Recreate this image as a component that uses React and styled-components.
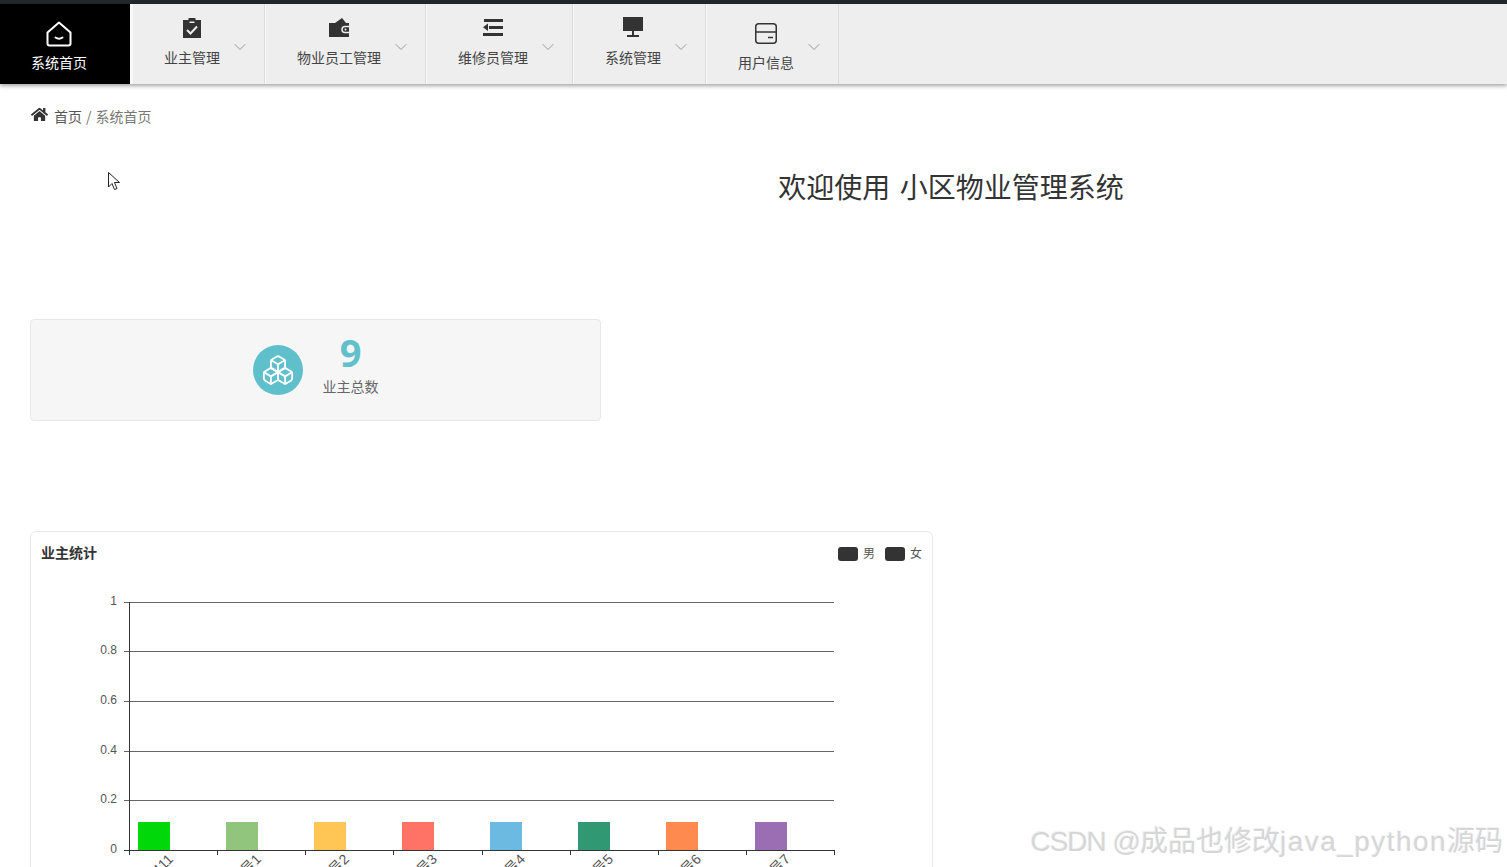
import React from 'react';
import styled, { createGlobalStyle } from 'styled-components';
import { FaHome } from 'react-icons/fa';
import { Boxes, ChevronDown } from 'lucide-react';

const GlobalStyle = createGlobalStyle`
  html, body {
    margin: 0;
    height: 100%;
    overflow: hidden;
    background: #ffffff;
  }
  body {
    color: #333333;
    font-family: "Open Sans", "Noto Sans CJK SC", sans-serif;
    font-size: 14px;
  }
`;

const Page = styled.div`
  height: 867px;
  overflow: hidden;
  position: relative;
`;

const TopStrip = styled.div`
  background: #20282a;
  height: 4px;
`;

const Nav = styled.nav`
  background: #eeeeee;
  box-shadow: 0 2px 4px rgba(0, 0, 0, 0.35);
  display: flex;
  height: 80px;
  position: relative;
`;

const HomeTab = styled.a`
  align-items: center;
  background: #000000;
  box-sizing: border-box;
  color: #ffffff;
  display: flex;
  flex-direction: column;
  gap: 5px;
  padding: 17px 12px 0 0;
  width: 130px;
`;

const NavItem = styled.a`
  align-items: center;
  border-left: 1px solid #f8f8f8;
  border-right: 1px solid #dcdcdc;
  box-sizing: border-box;
  color: #444444;
  display: flex;
  gap: 15px;
  padding: 0 19px 0 31px;
  &:nth-of-type(2) {
    border-left-width: 3px;
  }
`;

const NavBody = styled.div`
  align-items: center;
  box-sizing: border-box;
  display: flex;
  flex-direction: column;
  gap: ${p => (p.$low ? '5px' : '6px')};
  height: 80px;
  padding-top: ${p => (p.$low ? '17px' : '11px')};
`;

const NavLabel = styled.span`
  font-family: "Noto Sans CJK SC", sans-serif;
  font-size: 14px;
  line-height: 20px;
  white-space: nowrap;
`;

const NavIcon = styled.svg`
  display: block;
  height: 26px;
  width: 26px;
`;

const Caret = styled(ChevronDown)`
  color: #888888;
  flex: none;
  margin: 5px -5px 0;
`;

const Main = styled.main`
  padding: 0 30px;
`;

const Crumbs = styled.div`
  align-items: center;
  color: #777777;
  display: flex;
  font-family: "Noto Sans CJK SC", sans-serif;
  font-size: 14px;
  height: 20px;
  margin-top: 22px;
  svg {
    color: #333333;
    margin: -3px 6px 0 1px;
  }
  b {
    color: #555555;
    font-weight: 400;
  }
  i {
    font-style: normal;
    margin: 0 4px;
  }
`;

const Title = styled.h1`
  color: #333333;
  font-family: "Noto Sans CJK SC", sans-serif;
  font-size: 28px;
  font-weight: 400;
  line-height: 40px;
  margin: 40px 0 0 396px;
  text-align: center;
  width: 1050px;
  word-spacing: 3px;
`;

const StatCard = styled.section`
  align-items: center;
  background: #f6f6f6;
  border: 1px solid #e8e8e8;
  border-radius: 4px;
  box-sizing: border-box;
  display: flex;
  gap: 20px;
  height: 102px;
  justify-content: center;
  margin-top: 113px;
  width: 571px;
`;

const StatIcon = styled.div`
  align-items: center;
  background: #5fbfcb;
  border-radius: 50%;
  color: #ffffff;
  display: flex;
  height: 50px;
  justify-content: center;
  width: 50px;
`;

const StatText = styled.div`
  align-items: center;
  display: flex;
  flex-direction: column;
  margin-top: -14px;
`;

const StatNumber = styled.div`
  color: #62c0cb;
  font-family: "Open Sans", sans-serif;
  font-size: 38px;
  font-weight: 700;
  line-height: 44px;
`;

const StatLabel = styled.div`
  color: #666666;
  font-family: "Noto Sans CJK SC", sans-serif;
  font-size: 14px;
  line-height: 20px;
  margin-top: 2px;
`;

const ChartCard = styled.section`
  background: #ffffff;
  border: 1px solid #e8e8e8;
  border-radius: 6px;
  box-sizing: border-box;
  height: 400px;
  margin-top: 110px;
  width: 903px;
`;

const ChartHead = styled.div`
  align-items: center;
  display: flex;
  height: 42px;
  justify-content: space-between;
  padding: 0 10px;
`;

const ChartTitle = styled.div`
  color: #333333;
  font-family: "Noto Sans CJK SC", sans-serif;
  font-size: 14px;
  font-weight: 700;
  margin-top: -2px;
`;

const Legend = styled.div`
  align-items: center;
  color: #555555;
  display: flex;
  font-family: "Noto Sans CJK SC", sans-serif;
  font-size: 12px;
  gap: 5px;
  span:not(:empty) {
    margin-top: -2px;
  }
`;

const LegendSwatch = styled.span`
  background: #333333;
  border-radius: 3px;
  height: 14px;
  margin-left: ${p => (p.$gap ? '5px' : '0')};
  margin-top: 2px;
  width: 20px;
`;

const ChartSvg = styled.svg`
  display: block;
`;

const AxisText = styled.text`
  fill: #555555;
  font-family: "Liberation Sans", "Noto Sans CJK SC", sans-serif;
  font-size: ${p => p.$size || 12}px;
`;

const Watermark = styled.div`
  bottom: 8px;
  color: #d6d6d6;
  font-family: "Liberation Sans", "Noto Sans CJK SC", sans-serif;
  font-size: 28px;
  line-height: 34px;
  position: absolute;
  right: 4px;
  text-shadow: 1px 1px 1px #ffffff, -1px -1px 1px #f0f0f0;
  white-space: nowrap;
`;

const WatermarkLatin = styled.span`
  letter-spacing: ${p => p.$spacing};
`;

const Cursor = styled.svg`
  left: 107px;
  position: absolute;
  top: 171px;
`;

const HouseIcon = () => (
  <NavIcon viewBox="0 0 26 26" fill="none" stroke="#ffffff" strokeWidth="2" strokeLinejoin="round">
    <path d="M13 1.5 L24.5 11.5 V22.5 a2 2 0 0 1 -2 2 H3.5 a2 2 0 0 1 -2 -2 V11.5 Z" />
    <path d="M9.5 16.5 q3.5 2.5 7 0" strokeLinecap="round" />
  </NavIcon>
);

const ClipboardIcon = () => (
  <NavIcon viewBox="0 0 26 26">
    <path fill="#333" d="M4 5 H9.5 V3 H16.5 V5 H22 V23 H4 Z" />
    <path fill="#eee" d="M10.5 6.5 H15.5 V8 H10.5 Z" />
    <path fill="none" stroke="#eee" strokeWidth="2" d="M8 15 L11.5 18.5 L18 11.5" />
  </NavIcon>
);

const WalletIcon = () => (
  <NavIcon viewBox="0 0 26 26">
    <path fill="#333" d="M3 8 H23 V22 H3 Z" />
    <path fill="#333" d="M9 8 L16 3 L20 8 Z" />
    <path fill="none" stroke="#eee" strokeWidth="1.5" d="M23 11.5 H19 a3 3 0 0 0 0 6 H23" />
    <circle cx="19.5" cy="14.5" r="1" fill="#eee" />
  </NavIcon>
);

const OutdentIcon = () => (
  <NavIcon viewBox="0 0 26 26">
    <path fill="#333" d="M4 4 H23 V7 H4 Z M3 18 H23 V21 H3 Z M9 11 H23 V14 H9 Z" />
    <path fill="#333" d="M8 8.5 V16 L3 12.25 Z" />
  </NavIcon>
);

const MonitorIcon = () => (
  <NavIcon viewBox="0 0 26 26">
    <path fill="#333" d="M3 2 H23 V16 H3 Z" />
    <path fill="#333" d="M12 16 H14 V20 H19 V22 H7 V20 H12 Z" />
  </NavIcon>
);

const CardIcon = () => (
  <NavIcon viewBox="0 0 26 26" fill="none" stroke="#333" strokeWidth="1.5">
    <rect x="2.75" y="2.75" width="20.5" height="19.5" rx="3" />
    <path d="M2.75 11 H23.25" />
    <path d="M15 16.5 H20" />
  </NavIcon>
);

const navItems = [
  { label: '业主管理', Icon: ClipboardIcon },
  { label: '物业员工管理', Icon: WalletIcon },
  { label: '维修员管理', Icon: OutdentIcon },
  { label: '系统管理', Icon: MonitorIcon },
  { label: '用户信息', Icon: CardIcon, low: true }
];

// plot coordinates are relative to the chart svg, which starts at x=31 y=574 on the page
const PLOT_LEFT = 98;
const PLOT_RIGHT = 803;
const PLOT_TOP = 28;
const PLOT_BOTTOM = 276;
const yTicks = [
  { label: '1', offset: 0 },
  { label: '0.8', offset: 49 },
  { label: '0.6', offset: 99 },
  { label: '0.4', offset: 149 },
  { label: '0.2', offset: 198 },
  { label: '0', offset: 248 }
];
const bars = [
  { name: '111', color: '#00d80a' },
  { name: '房号1', color: '#91c47c' },
  { name: '房号2', color: '#ffc655' },
  { name: '房号3', color: '#fe7366' },
  { name: '房号4', color: '#6cb9e2' },
  { name: '房号5', color: '#309873' },
  { name: '房号6', color: '#ff8a4f' },
  { name: '房号7', color: '#9b6db2' }
];

const BarChart = () => {
  const colWidth = (PLOT_RIGHT - PLOT_LEFT) / bars.length;
  return (
    <ChartSvg width="901" height="320" viewBox="0 0 901 320">
      {yTicks.map(({ label, offset }) => {
        const y = PLOT_TOP + offset + 0.5;
        return (
          <g key={label}>
            <line x1={PLOT_LEFT - 5} x2={PLOT_RIGHT} y1={y} y2={y} stroke={offset === 248 ? '#333' : '#666'} />
            <AxisText x={PLOT_LEFT - 12} y={y + 2} textAnchor="end">{label}</AxisText>
          </g>
        );
      })}
      <line x1={PLOT_LEFT + 0.5} x2={PLOT_LEFT + 0.5} y1={PLOT_TOP} y2={PLOT_BOTTOM + 5} stroke="#333" />
      {bars.map((bar, i) => {
        const left = Math.floor(PLOT_LEFT + i * colWidth + 0.2);
        const tickX = Math.round(PLOT_LEFT + (i + 1) * colWidth) + 0.5;
        const labelX = left + 45;
        const labelY = PLOT_BOTTOM + 10;
        return (
          <g key={bar.name}>
            <rect x={left + 9} y={PLOT_BOTTOM - 28} width="32" height="28" fill={bar.color} />
            <line x1={tickX} x2={tickX} y1={PLOT_BOTTOM} y2={PLOT_BOTTOM + 5} stroke="#333" />
            <AxisText
              $size={14}
              x={labelX}
              y={labelY}
              textAnchor="end"
              transform={`rotate(-45 ${labelX} ${labelY})`}
            >
              {bar.name}
            </AxisText>
          </g>
        );
      })}
    </ChartSvg>
  );
};

export default function App() {
  return (
    <Page>
      <GlobalStyle />
      <TopStrip />
      <Nav>
        <HomeTab>
          <HouseIcon />
          <NavLabel>系统首页</NavLabel>
        </HomeTab>
        {navItems.map(({ label, Icon, low }) => (
          <NavItem key={label}>
            <NavBody $low={low}>
              <Icon />
              <NavLabel>{label}</NavLabel>
            </NavBody>
            <Caret size={20} strokeWidth={1} />
          </NavItem>
        ))}
      </Nav>
      <Main>
        <Crumbs>
          <FaHome size={17} />
          <b>首页</b>
          <i>/</i>
          <span>系统首页</span>
        </Crumbs>
        <Title>欢迎使用 小区物业管理系统</Title>
        <StatCard>
          <StatIcon>
            <Boxes size={34} strokeWidth={1.3} />
          </StatIcon>
          <StatText>
            <StatNumber>9</StatNumber>
            <StatLabel>业主总数</StatLabel>
          </StatText>
        </StatCard>
        <ChartCard>
          <ChartHead>
            <ChartTitle>业主统计</ChartTitle>
            <Legend>
              <LegendSwatch />
              <span>男</span>
              <LegendSwatch $gap />
              <span>女</span>
            </Legend>
          </ChartHead>
          <BarChart />
        </ChartCard>
      </Main>
      <Cursor width="14" height="21" viewBox="0 0 14 21">
        <path d="M1.5 1.5 V16 L5 12.5 L7.5 18.5 L10 17.5 L7.5 11.5 L12.5 11.5 Z" fill="#ffffff" stroke="#222222" strokeWidth="1" />
      </Cursor>
      <Watermark>
        <WatermarkLatin $spacing="-1px">CSDN @</WatermarkLatin>
        成品也修改
        <WatermarkLatin $spacing="1.45px">java_python</WatermarkLatin>
        源码
      </Watermark>
    </Page>
  );
}
